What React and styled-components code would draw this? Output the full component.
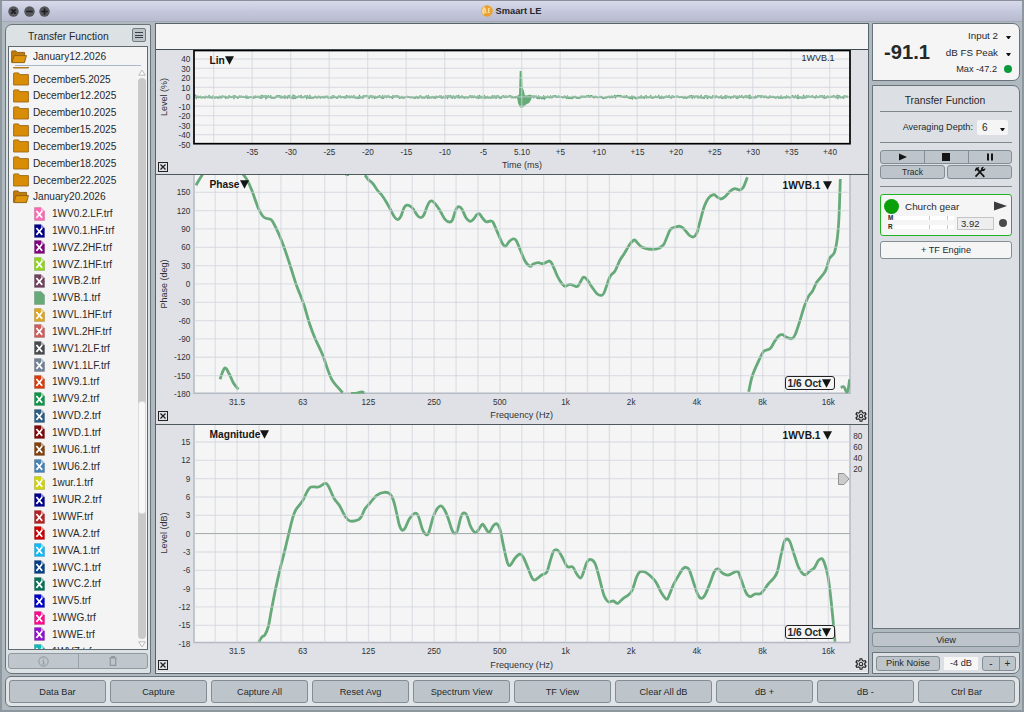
import React from "react";
import styled, { createGlobalStyle, css } from "styled-components";
import { MdOutlineSettings } from "react-icons/md";

const GlobalStyle = createGlobalStyle`
  * {
    box-sizing: border-box;
  }
  body {
    margin: 0;
    background: #b0b8c0;
    font-family: "Liberation Sans", Arial, sans-serif;
    color: #26282b;
  }
`;

const FOLDERS = [
  "December5.2025",
  "December12.2025",
  "December10.2025",
  "December15.2025",
  "December19.2025",
  "December18.2025",
  "December22.2025",
];

const FILES = [
  { name: "1WV0.2.LF.trf", color: "#ff69b4" },
  { name: "1WV0.1.HF.trf", color: "#00008b" },
  { name: "1WVZ.2HF.trf", color: "#800080" },
  { name: "1WVZ.1HF.trf", color: "#8fd422" },
  { name: "1WVB.2.trf", color: "#704060" },
  { name: "1WVB.1.trf", color: "#66aa7a", plain: true },
  { name: "1WVL.1HF.trf", color: "#daa520" },
  { name: "1WVL.2HF.trf", color: "#cd5c5c" },
  { name: "1WV1.2LF.trf", color: "#484a4c" },
  { name: "1WV1.1LF.trf", color: "#708096" },
  { name: "1WV9.1.trf", color: "#d83a0a" },
  { name: "1WV9.2.trf", color: "#0e9648" },
  { name: "1WVD.2.trf", color: "#2a5c84" },
  { name: "1WVD.1.trf", color: "#800808" },
  { name: "1WU6.1.trf", color: "#82400e" },
  { name: "1WU6.2.trf", color: "#4682b4" },
  { name: "1wur.1.trf", color: "#cfd30a" },
  { name: "1WUR.2.trf", color: "#00008f" },
  { name: "1WWF.trf", color: "#b22222" },
  { name: "1WVA.2.trf", color: "#cc0000" },
  { name: "1WVA.1.trf", color: "#10b8f8" },
  { name: "1WVC.1.trf", color: "#043e88" },
  { name: "1WVC.2.trf", color: "#067058" },
  { name: "1WV5.trf", color: "#0000cd" },
  { name: "1WWG.trf", color: "#ff0890" },
  { name: "1WWE.trf", color: "#9010cc" },
  { name: "1WVZ.trf", color: "#10b8b8" },
];

const COMMANDS = [
  "Data Bar",
  "Capture",
  "Capture All",
  "Reset Avg",
  "Spectrum View",
  "TF View",
  "Clear All dB",
  "dB +",
  "dB -",
  "Ctrl Bar",
];

const FREQS = ["31.5", "63", "125", "250", "500", "1k", "2k", "4k", "8k", "16k"];

const PHASE = [
  "196,185.3 199,180 202.7,174",
  "242.7,174 246.7,179.3 251.7,190 258.3,208.3 262.7,216 266,218.3 269.3,219 272.3,221 280,236.7 285,250 290,265 296,284 300,294.3 304,305 310,325 315,338.3 322.7,355 326.7,366.7 331.7,379.3 337.3,386.7 342.7,392.7",
  "345.5,174.6 349,174.6",
  "351,393.3 356,393.3 361.7,392 364.3,393",
  "365,175.2 368.3,179.7 372.7,183.3 377.7,190.7 381.7,195 386.7,202.7 390.7,210 394.3,216.7 397.7,219.6 400.7,216.7 404,207.8 406.7,205.2 410,206 413.3,209 417.3,215.3 420.7,217.7 423.7,215.3 427.3,206 430,201.3 433.3,201.7 439,209 445,219.3 450,222 452.7,219.3 456,209.3 459,206.7 462,209.3 466,217.7 470,221.3 473.3,219.3 476.7,214.7 479.3,213.7 482,217.3 486,221.7 490.7,221 493.3,222.7 498.3,234.3 502.3,243.3 505.5,246.3 509,241.7 512.7,239 516,240.3 520.7,251 525,261 530,266.3 533.3,264 538.3,262.7 543.3,263.7 549.3,261 552.3,264.3 557.3,276 561.7,283.3 565.3,286.3 570,284.3 576.7,286.7 579.3,284 583.3,277.3 586.7,279.3 591.7,286.7 597.3,294 601.7,295.3 604.3,292.3 610,276.7 615,271 620,260 624,254 630,244 634.3,240 637.3,242.7 641.7,247 648.3,249 656.7,249 663.3,245 666.7,237.7 670,230 673.3,227.7 680,226.3 684,229 689.3,235.3 693.3,237 696.7,233.3 700,221.7 704,207.3 708.3,198.3 713.7,194.7 716.7,196.7 721,199 725,196.7 730,191.3 734.7,188.7 740,190 743.3,187.3 747.3,177.3",
  "748.7,391.7 752.3,376 758.3,361.7 763.3,351.7 766.7,350 770.7,348 775,340.7 779.3,335.3 782.7,334.7 786,337 791.7,338.7 795,335 799.3,322.7 804,307.3 808,297.3 812.7,290.7 816.7,282.3 824,273.3 826.7,267.7 829.3,258.7 832.3,255.3 834.7,251.7 837.3,238.3 839,216.7 840.3,179",
  "840.7,387.7 843.7,386.7 847.3,392 849.7,379.3",
  "220,379.3 224.7,368 229.3,374 233.3,382.7 238.3,389.3",
];

const MAGNITUDE = [
  "258.7,642 261.7,637.3 265,634.7 268.3,626.7 271.3,610.7 275.7,588.3 280,569.3 284.3,552.3 289,532.7 292.3,519.3 295.7,510 302.3,501.3 307.3,491.3 311,487 318.3,487 325,483.5 328.3,486 334,498.3 339.3,505.3 345,516 350,521 358.3,519.7 361.7,516 365,508.7 370,503 376.7,495.3 384.3,492.3 390,494 393.3,500 396.7,513.3 399.3,525 402.3,530.3 405,528.3 409.3,519 415,513.3 418.3,516 422.7,530 426,534.6 428.7,532.7 433.3,516.7 437.7,508 441.3,506 445,510.7 448.3,518.7 451.7,529.3 454.3,533.3 457.3,530.7 461,516.7 463.7,513 467,515.7 470.7,526.7 475.3,532.7 478.3,530 482.3,524.3 485,527.3 489,532.3 493.3,525.7 496.7,523.7 500,529.3 503.3,545 506.7,560 509.6,565.7 515,558.3 520,554 523.3,557.3 527.7,567.3 531.7,577.3 534.7,580 541.7,575 546.7,572.3 550,561.7 553.3,551.7 556,549.7 559.3,552 563.3,559.3 567.3,566.7 572.7,567 576.7,574 580.7,578 583.3,572.7 586.7,562.7 590.3,559.3 595,563.3 599,576.7 603.3,593.3 606,599.3 608.7,602 613.3,601 617.7,603.3 623.3,598.3 628.3,595 632.3,590 636.7,576.7 640,571.7 645,572 649.3,575 655.7,581.7 661.7,593.3 666.7,599.3 669.3,595 673.3,585 678.3,576 682.7,569 686,567.3 689.3,570 693.3,581.7 697.7,594.3 701.3,598.3 705,595 710,583.3 714.3,571.7 718.3,569 722.7,573.3 728.3,575 737.3,571.3 740.7,578.3 746,592.7 750,596.7 755,594 761,593.3 768.3,584 773.3,578.7 777.3,571.7 781,555 784.3,541.7 787,539 790,542 794.3,555 798.3,566.7 802.3,573.3 805.7,574.7 810,571 814.3,568 818.3,560.7 821.7,558.7 824.3,562.7 827.7,575 830.3,593.3 832.7,616.7 835,641.7",
];

// catmull-rom through the points
function smooth(str) {
  const p = str.split(" ").map((s) => s.split(",").map(Number));
  let d = `M${p[0][0]} ${p[0][1]}`;
  for (let i = 0; i < p.length - 1; i++) {
    const a = p[i - 1] || p[i];
    const b = p[i];
    const c = p[i + 1];
    const e = p[i + 2] || c;
    d += `C${b[0] + (c[0] - a[0]) / 6} ${b[1] + (c[1] - a[1]) / 6} ${
      c[0] - (e[0] - b[0]) / 6
    } ${c[1] - (e[1] - b[1]) / 6} ${c[0]} ${c[1]}`;
  }
  return d;
}

function impulseNoise() {
  let seed = 7;
  let d = "M195 97";
  for (let x = 195.5; x < 849; x += 0.8) {
    seed = (seed * 16807) % 2147483647;
    const r = seed / 2147483647 - 0.5;
    const ring = x > 524 && x < 640 ? Math.sin(x / 5) * 0.6 : 0;
    d += `L${x.toFixed(1)} ${(97 + r * 1.7 + ring).toFixed(2)}`;
  }
  return d;
}

const range = (n) => Array.from({ length: n }, (_, i) => i);

/* ---------- frame ---------- */

const Window = styled.div`
  width: 1024px;
  height: 712px;
  display: flex;
  flex-direction: column;
  overflow: hidden;
  background: #b0b8c0;
  border-top: 1px solid #8b8f9c;
  border-left: 2px solid #8c979e;
  border-right: 2px solid #8c979e;
  border-bottom: 2px solid #8c979e;
`;

const TitleBar = styled.header`
  height: 21px;
  flex: none;
  display: grid;
  grid-template-columns: 1fr auto 1fr;
  align-items: center;
  padding-left: 6px;
  background: linear-gradient(#d8daea, #c6c9de 50%, #b8bbd0);
  border-bottom: 1px solid #a4a9b8;
`;

const Lights = styled.div`
  display: flex;
  gap: 4.5px;
`;

const Title = styled.div`
  display: flex;
  align-items: center;
  gap: 3px;
  padding-right: 8px;
  font-size: 9.3px;
  font-weight: bold;
`;

const Body = styled.main`
  flex: none;
  height: 651px;
  display: grid;
  grid-template-columns: 146px 714px 148px;
  column-gap: 3.5px;
  padding: 1px 0 0 3px;
`;

const CommandBar = styled.footer`
  flex: none;
  height: 31px;
  margin: 3px 2px 0 3px;
  padding: 3px 4px 3px 3px;
  display: grid;
  grid-template-columns: repeat(10, 1fr);
  gap: 4px;
  background: #e0e4e7;
  border: 1px solid #68737a;
  border-radius: 6px;
`;

const Button = styled.button`
  display: flex;
  align-items: center;
  justify-content: center;
  height: ${(p) => p.$h || 23}px;
  padding: 0;
  font-family: inherit;
  font-size: ${(p) => p.$size || 9.2}px;
  color: #26282b;
  border: 1px solid #828d94;
  border-radius: 3px;
  background: ${(p) => (p.$light ? "#f5f5f5" : "#bdc5ca")};
`;

/* ---------- data bar ---------- */

const DataPanel = styled.aside`
  margin-top: 1px;
  display: flex;
  flex-direction: column;
  padding: 0 2px 2px 2px;
  border: 1px solid #68737a;
  border-radius: 7px 2px 2px 7px;
  background: #dce1e4;
`;

const DataHeader = styled.div`
  height: 21px;
  flex: none;
  display: flex;
  align-items: center;
  padding: 2px 2px 0 20px;
  font-size: 10.35px;
`;

const MenuButton = styled.button`
  width: 14px;
  height: 14px;
  margin: -3px 0 0 auto;
  padding: 2px;
  display: flex;
  flex-direction: column;
  justify-content: space-evenly;
  border: 1px solid #717b82;
  border-radius: 2px;
  background: #bcc4c9;

  i {
    height: 1px;
    background: #3b4247;
  }
`;

const ListBox = styled.div`
  height: 604px;
  flex: none;
  display: flex;
  flex-direction: column;
  border: 1px solid #5f6a70;
  background: #f4f4f4;
`;

const RootRow = styled.div`
  height: 19px;
  flex: none;
  display: flex;
  align-items: center;
  gap: 6px;
  margin: 0 6px 0 6px;
  padding-top: 1px;
  border-bottom: 1px solid #a9b8cd;
  font-size: 10.2px;

  svg {
    margin-left: -4px;
  }
`;

const ListBody = styled.div`
  flex: 1;
  min-height: 0;
  display: flex;
  margin-top: 1px;
`;

const Tree = styled.div`
  flex: 1;
  min-width: 0;
  overflow: hidden;
`;

const Row = styled.div`
  height: 16.83px;
  display: flex;
  align-items: center;
  gap: ${(p) => (p.$file ? 7 : 4)}px;
  padding-left: ${(p) => (p.$file ? 25 : 4)}px;
  white-space: nowrap;
  font-size: ${(p) => (p.$file ? 10 : 10.15)}px;

  &:first-child {
    margin-top: -13.2px;
  }
`;

const Scroll = styled.div`
  width: 10px;
  flex: none;
  display: flex;
  flex-direction: column;
  align-items: center;
  padding: 2px 1px 1px 0;
`;

const ScrollTrack = styled.div`
  flex: 1;
  width: 8px;
  margin: 2px 0;
  padding-top: 323px;
  border-radius: 4px;
  background: #c9c9c9;
`;

const ScrollThumb = styled.div`
  height: 113px;
  border-radius: 3px;
  border: 1px solid #dadada;
  background: #f8f8f8;
`;

const ListTools = styled.div`
  margin-top: 3px;
  height: 16px;
  display: grid;
  grid-template-columns: 1fr 1fr;
  border: 1px solid #909aa0;
  border-radius: 3px;
  background: #bfc7cc;

  span {
    display: flex;
    align-items: center;
    justify-content: center;
  }
  span + span {
    border-left: 1px solid #98a2a8;
  }
`;

/* ---------- plots ---------- */

const Plots = styled.section`
  display: flex;
  flex-direction: column;
  border: 1px solid #56636a;
  background: #f5f5f5;
`;

const Spare = styled.div`
  height: 26px;
  flex: none;
  border-bottom: 1px solid #3c4c50;
`;

const Plot = styled.div`
  position: relative;
  height: ${(p) => p.$h}px;
  flex: none;
  background: #dfe1e6;

  & + & {
    border-top: 1px solid #4c595f;
  }
`;

const Canvas = styled.svg`
  display: block;
  font-family: "Liberation Sans", Arial, sans-serif;
`;

const PlotLabel = styled.div`
  position: absolute;
  display: flex;
  align-items: center;
  gap: ${(p) => p.$gap || 0}px;
  height: 12px;
  font-size: 10.2px;
  font-weight: bold;
  color: #151515;
  white-space: nowrap;
  ${(p) =>
    p.$right
      ? css`
          top: 4px;
          right: 36px;
        `
      : css`
          top: ${p.$top || 3}px;
          left: 54px;
        `}
`;

const TraceName = styled.div`
  position: absolute;
  top: 3px;
  right: 33px;
  font-size: 9px;
  line-height: 11px;
`;

const Smoothing = styled.div`
  position: absolute;
  right: 33px;
  bottom: ${(p) => p.$bottom}px;
  width: 50px;
  height: 14px;
  display: flex;
  align-items: center;
  justify-content: center;
  gap: 1px;
  font-size: 10.2px;
  font-weight: bold;
  white-space: nowrap;
  border: 1px solid #222;
  border-radius: 3px;
  background: #f5f5f5;
`;

const CloseBox = styled.div`
  position: absolute;
  left: 2px;
  bottom: ${(p) => p.$bottom}px;
  width: 10px;
  height: 10px;
  display: flex;
  border: 1px solid #222;
`;

const Gear = styled(MdOutlineSettings)`
  position: absolute;
  right: 0;
  bottom: 1px;
  width: 14px;
  height: 14px;
  color: #222;
`;

const Down = () => (
  <svg width="9" height="9" viewBox="0 0 9 9">
    <path d="M0 .3H9L4.5 8.7Z" fill="#151515" />
  </svg>
);

const Close = ({ bottom }) => (
  <CloseBox $bottom={bottom}>
    <svg width="8" height="8" viewBox="0 0 8 8">
      <path d="M1.5 1.5L6.5 6.5M6.5 1.5L1.5 6.5" stroke="#222" strokeWidth="1.3" />
    </svg>
  </CloseBox>
);

const GRID = "rgba(208,211,220,0.62)";

function Ticks({ items, x, y, step, anchor = "end" }) {
  return items.map((t, i) => (
    <text
      key={t}
      x={anchor === "end" ? x : x + step * i}
      y={anchor === "end" ? y + step * i : y}
      fontSize="8.2"
      textAnchor={anchor}
      fill="#303236"
    >
      {t}
    </text>
  ));
}

function AxisName({ y, children }) {
  return (
    <text
      transform={`translate(167 ${y}) rotate(-90)`}
      textAnchor="middle"
      fontSize="9"
      fill="#303236"
    >
      {children}
    </text>
  );
}

function ImpulsePlot() {
  return (
    <Plot $h={124}>
      <Canvas width="712" height="124" viewBox="156 50 712 124">
        <rect x="194" y="51" width="656" height="92.5" fill="#f5f5f5" />
        <path d={impulseNoise()} stroke="#66aa7a" strokeWidth="2" fill="none" />
        <path
          d="M517 96L519 94.5L519.7 71H522L522.6 88L524 91L525 96L532 97L531 100L529 103L526 104.5L523 107.5H520L518 103Z"
          fill="#66aa7a"
        />
        <g stroke={GRID} strokeWidth="1.3">
          {range(9).map((i) => (
            <path key={i} d={`M194 ${59 + i * 9.45}H850`} />
          ))}
          {range(17).map((i) => (
            <path key={i} d={`M${213.7 + i * 38.5} 51V143`} />
          ))}
        </g>
        <rect x="194" y="50.5" width="656" height="93.2" fill="none" stroke="#000" strokeWidth="1.7" />
        <Ticks
          items={["40", "30", "20", "10", "0", "-10", "-20", "-30", "-40", "-50"]}
          x={190.3}
          y={62}
          step={9.5}
        />
        <Ticks
          items={["-35", "-30", "-25", "-20", "-15", "-10", "-5", "5.10", "+5", "+10", "+15", "+20", "+25", "+30", "+35", "+40"]}
          x={252.5}
          y={155}
          step={38.5}
          anchor="middle"
        />
        <AxisName y={97}>Level (%)</AxisName>
        <text x="522" y="168.3" textAnchor="middle" fontSize="9" fill="#303236">
          Time (ms)
        </text>
      </Canvas>
      <PlotLabel $top={4}>
        Lin
        <Down />
      </PlotLabel>
      <TraceName>1WVB.1</TraceName>
      <Close bottom={2} />
    </Plot>
  );
}

function FreqPlot({ top, height, bottom, first, traces, ticks, axis, axisY, label, scale, closeBottom }) {
  return (
    <Plot $h={height + 1}>
      <Canvas width="712" height={height} viewBox={`156 ${top} 712 ${height}`}>
        <rect x="194" y={top} width="656" height={bottom - top} fill="#f5f5f5" />
        <path d={`M194 ${top}V${bottom}H850V${top}`} fill="none" stroke="#b4b9c3" strokeWidth="1.5" />
        <svg x="194" y={top} width="656" height={bottom - top + 0.5} viewBox={`194 ${top} 656 ${bottom - top + 0.5}`}>
          {traces.map((t) => (
            <path
              key={t}
              d={smooth(t)}
              fill="none"
              stroke="#66aa7a"
              strokeWidth="2.8"
              strokeLinejoin="round"
            />
          ))}
        </svg>
        <g stroke={GRID} strokeWidth="1.3">
          {range(ticks.length - 1).map((i) => (
            <path key={i} d={`M194 ${first + i * 18.33}H850`} />
          ))}
          {range(29).map((i) => (
            <path key={i} d={`M${215.2 + i * 21.9} ${top}V${bottom}`} />
          ))}
        </g>
        {scale && <path d="M195 533.5H850" stroke="#a8aeac" />}
        <Ticks items={ticks} x={190.3} y={first + 3} step={18.33} />
        <Ticks items={FREQS} x={237} y={bottom + 11.8} step={65.7} anchor="middle" />
        <AxisName y={axisY}>{axis}</AxisName>
        <text x="521.7" y={bottom + 25} textAnchor="middle" fontSize="9.1" fill="#303236">
          Frequency (Hz)
        </text>
        {scale && (
          <>
            {["80", "60", "40", "20"].map((t, i) => (
              <text key={t} x="857.8" y={439.3 + i * 11} textAnchor="middle" fontSize="8.2" fill="#303236">
                {t}
              </text>
            ))}
            <path d="M838.5 473.5H844L849 479L844 484.5H838.5Z" fill="#ccc" stroke="#888" strokeWidth=".9" />
          </>
        )}
      </Canvas>
      <PlotLabel>
        {label}
        <Down />
      </PlotLabel>
      <PlotLabel $right $gap={2}>
        1WVB.1
        <Down />
      </PlotLabel>
      <Smoothing $bottom={closeBottom + 31}>
        1/6 Oct
        <Down />
      </Smoothing>
      <Close bottom={closeBottom} />
      <Gear />
    </Plot>
  );
}

/* ---------- control bar ---------- */

const Controls = styled.aside`
  display: flex;
  flex-direction: column;
`;

const LevelBox = styled.div`
  height: 58px;
  flex: none;
  display: flex;
  align-items: center;
  padding: 0 7px 0 11px;
  background: #f5f5f5;
  border: 1px solid #68737a;
  border-radius: 0 7px 7px 0;
`;

const Level = styled.div`
  width: 54px;
  font-size: 20.2px;
  font-weight: bold;
`;

const LevelInfo = styled.div`
  flex: 1;
  display: grid;
  row-gap: 0;
`;

const InfoLine = styled.div`
  height: 16.6px;
  display: flex;
  align-items: center;
  justify-content: flex-end;
  gap: 7px;
  font-size: ${(p) => p.$size || 9.8}px;
  white-space: nowrap;
`;

const Caret = styled.span`
  width: 5px;
  height: 0;
  margin: 4px 1px 0 1px;
  border-left: 2.5px solid transparent;
  border-right: 2.5px solid transparent;
  border-top: 3px solid #111;
`;

const Dot = styled.span`
  width: ${(p) => p.$d}px;
  height: ${(p) => p.$d}px;
  flex: none;
  border-radius: 50%;
  background: ${(p) => p.$c};
`;

const Measure = styled.div`
  height: 544px;
  flex: none;
  margin-top: 4px;
  padding: 6px 7px 0 7px;
  display: flex;
  flex-direction: column;
  background: #dce0e4;
  border: 1px solid #68737a;
  border-radius: 0 7px 0 0;
`;

const MeasureTitle = styled.div`
  height: 20px;
  line-height: 17px;
  text-align: center;
  padding-right: 2px;
  font-size: 10.35px;
  border-bottom: 1px solid #7d878d;
`;

const Depth = styled.div`
  height: 31px;
  display: flex;
  align-items: center;
  justify-content: flex-end;
  padding-right: 4px;
  gap: 4px;
  font-size: 9.15px;
  border-bottom: 1px solid #7d878d;
`;

const DepthSelect = styled.div`
  width: 31px;
  height: 15px;
  display: flex;
  align-items: center;
  justify-content: space-between;
  padding: 0 2px 0 5px;
  font-size: 10px;
  background: #f5f5f5;
  border-radius: 2px;
`;

const Transport = styled.div`
  margin-top: 7px;
  padding-bottom: 7px;
  display: grid;
  gap: 1px;
  border-bottom: 1px solid #7d878d;
`;

const Segments = styled.div`
  display: grid;
  grid-template-columns: repeat(${(p) => p.$n}, 1fr);
  height: ${(p) => p.$h}px;
  width: ${(p) => (p.$w ? p.$w + "px" : "auto")};
  border: 1px solid #828d94;
  border-radius: 3px;
  background: #bdc5ca;
  font-size: 10px;

  span {
    display: flex;
    align-items: center;
    justify-content: center;
  }
  span + span {
    border-left: 1px solid #828d94;
  }
`;

const Pair = styled.div`
  display: grid;
  grid-template-columns: 1fr 1fr;
  gap: 2px;
`;

const Engine = styled.div`
  height: 42px;
  margin: 7px 0 5px;
  padding: 3px 4px 0 3px;
  border: 1px solid #22b322;
  border-radius: 3px;
  background: #f5f5f5;
`;

const EngineTop = styled.div`
  height: 16px;
  display: flex;
  align-items: center;
  gap: 6px;
  font-size: 9.9px;

  svg {
    margin-left: auto;
  }
`;

const EngineBottom = styled.div`
  height: 18px;
  display: flex;
  align-items: center;
  gap: 3px;
  padding-left: 4px;
`;

const Meters = styled.div`
  width: 66px;
  margin-top: -2px;
  display: grid;
  row-gap: 1px;
`;

const MeterLine = styled.div`
  display: grid;
  grid-template-columns: 7px 34px 18px 7px;
  align-items: center;
  height: 8px;
  font-size: 6.3px;
  font-weight: bold;

  i {
    height: 4px;
    background: #fff;
  }
  i + i {
    border-left: 1px solid #c9c9c9;
  }
`;

const Delay = styled.div`
  width: 37px;
  height: 13px;
  margin-right: 2px;
  padding-left: 3px;
  line-height: 12px;
  font-size: 9.5px;
  border: 1px solid #c4c4c4;
  background: #eee;
`;

const Generator = styled.div`
  height: 22px;
  margin-top: 5px;
  padding: 0 3px;
  display: flex;
  align-items: center;
  background: #dce0e4;
  border: 1px solid #68737a;
  border-radius: 0 0 7px 0;
`;

const Gain = styled.div`
  width: 34px;
  height: 13px;
  margin: 0 4px;
  display: flex;
  align-items: center;
  justify-content: center;
  font-size: 9.2px;
  background: #f6f6f6;
`;

const NoiseButton = styled(Button)`
  width: 64px;
`;

const ViewButton = styled(Button)`
  flex: none;
  margin-top: 3px;
`;

/* ---------- icons ---------- */

const Light = ({ d }) => (
  <svg width="11" height="11" viewBox="0 0 11 11">
    <circle cx="5.5" cy="5.5" r="5.2" fill="#55575a" />
    <path d={d} stroke="#1d1f22" strokeWidth="1.7" strokeLinecap="round" />
  </svg>
);

const Logo = () => (
  <svg width="12" height="12" viewBox="0 0 12 12">
    <circle cx="6" cy="6" r="5.8" fill="#eba02b" />
    <path d="M2.2 9.5A5 5 0 0 1 4 1.5L3.6 9.3Z" fill="#f7d9a0" />
    <path d="M4.6 3.4V7.6H6.3M9 3.4H7.4V7.6H9M7.4 5.4H8.8" stroke="#fff0cc" strokeWidth=".8" fill="none" />
  </svg>
);

const FolderIcon = () => (
  <svg width="16" height="14" viewBox="0 0 16 14">
    <path d="M.6 13V1.6Q.6.9 1.3.9H5.6L6.6 2.6H15.4V13Z" fill="#d98c06" stroke="#9b6a16" strokeWidth=".9" />
  </svg>
);

const OpenFolderIcon = () => (
  <svg width="16" height="14" viewBox="0 0 16 14">
    <path d="M.6 12V1.6Q.6.9 1.3.9H5L6 2.4H13.6V12Z" fill="#c27b08" stroke="#8b5f14" strokeWidth=".9" />
    <path d="M.8 12.6L3.2 5.6H15.5L13.4 12.6Z" fill="#e0950e" stroke="#8b5f14" strokeWidth=".9" />
  </svg>
);

const FileIcon = ({ color, plain }) => (
  <svg width="11" height="14" viewBox="0 0 11 14">
    <path d="M.4.5H7L10.6 4V13.5H.4Z" fill={color} stroke="#00000038" strokeWidth=".6" />
    {!plain && <path d="M7 .5V4H10.6Z" fill="#ffffff88" />}
    {!plain && <path d="M2.4 4L8.2 10.9M8.2 4L2.4 10.9" stroke="#fff" strokeWidth="1.7" />}
  </svg>
);

const ToolsIcon = () => (
  <svg width="12" height="12" viewBox="0 0 12 12">
    <path d="M1.5 10.6L8.2 3.6" stroke="#151515" strokeWidth="1.7" />
    <path d="M7.3 4.3A2.3 2.3 0 0 1 10 .9L8.8 2.3L9.7 3.2L11.2 2A2.3 2.3 0 0 1 7.9 4.8Z" fill="#151515" />
    <path d="M4.2 4.2L10.3 10.8" stroke="#151515" strokeWidth="1.7" />
    <path d="M.7 4.4L2 1.8L5.6.9L4.4 2.2L5.4 3.4L3.8 5L2.7 3.9L1.7 5.3Z" fill="#151515" />
  </svg>
);

function DataBar() {
  return (
    <DataPanel>
      <DataHeader>
        Transfer Function
        <MenuButton>
          <i />
          <i />
          <i />
        </MenuButton>
      </DataHeader>
      <ListBox>
        <RootRow>
          <OpenFolderIcon />
          January12.2026
        </RootRow>
        <ListBody>
          <Tree>
            <Row>
              <FolderIcon />
            </Row>
            {FOLDERS.map((name) => (
              <Row key={name}>
                <FolderIcon />
                {name}
              </Row>
            ))}
            <Row>
              <OpenFolderIcon />
              January20.2026
            </Row>
            {FILES.map((f) => (
              <Row key={f.name} $file>
                <FileIcon color={f.color} plain={f.plain} />
                {f.name}
              </Row>
            ))}
          </Tree>
          <Scroll>
            <svg width="8" height="7" viewBox="0 0 8 7">
              <path d="M4 1L7.3 6.2H.7Z" fill="#fafafa" stroke="#bbb" />
            </svg>
            <ScrollTrack>
              <ScrollThumb />
            </ScrollTrack>
            <svg width="8" height="7" viewBox="0 0 8 7">
              <path d="M4 6L7.3 .8H.7Z" fill="#fafafa" stroke="#bbb" />
            </svg>
          </Scroll>
        </ListBody>
      </ListBox>
      <ListTools>
        <span>
          <svg width="11" height="11" viewBox="0 0 11 11" fill="none" stroke="#8e989e">
            <circle cx="5.5" cy="5.5" r="4.7" />
            <path d="M5.5 2.3V3.5M4.5 4.8H5.6V8M4.3 8.1H6.9" />
          </svg>
        </span>
        <span>
          <svg width="8" height="10" viewBox="0 0 8 10" fill="none" stroke="#8e989e">
            <path d="M.5 1.9H7.5M2.7 1.7V.6H5.3V1.7M1.3 2V9.3H6.7V2" strokeWidth="1.2" />
          </svg>
        </span>
      </ListTools>
    </DataPanel>
  );
}

function ControlBar() {
  return (
    <Controls>
      <LevelBox>
        <Level>-91.1</Level>
        <LevelInfo>
          <InfoLine>
            Input 2<Caret />
          </InfoLine>
          <InfoLine>
            dB FS Peak
            <Caret />
          </InfoLine>
          <InfoLine $size={9.2}>
            Max -47.2
            <Dot $d={8} $c="#0a9a3c" />
          </InfoLine>
        </LevelInfo>
      </LevelBox>
      <Measure>
        <MeasureTitle>Transfer Function</MeasureTitle>
        <Depth>
          Averaging Depth:
          <DepthSelect>
            6<Caret />
          </DepthSelect>
        </Depth>
        <Transport>
          <Segments $n={3} $h={14}>
            <span>
              <svg width="8" height="8" viewBox="0 0 8 8">
                <path d="M0 .5L8 4L0 7.5Z" fill="#151515" />
              </svg>
            </span>
            <span>
              <svg width="8" height="8" viewBox="0 0 8 8">
                <path d="M0 0H8V8H0Z" fill="#151515" />
              </svg>
            </span>
            <span>
              <svg width="8" height="8" viewBox="0 0 8 8">
                <path d="M1 .5H3V7.5H1ZM5 .5H7V7.5H5Z" fill="#151515" />
              </svg>
            </span>
          </Segments>
          <Pair>
            <Button $h={14} $size={8.5}>
              Track
            </Button>
            <Button $h={14}>
              <ToolsIcon />
            </Button>
          </Pair>
        </Transport>
        <Engine>
          <EngineTop>
            <Dot $d={15} $c="radial-gradient(circle at 50% 40%, #0aa00a 60%, #0b7d0b)" />
            Church gear
            <svg width="13" height="10" viewBox="0 0 13 10">
              <path d="M0 .5L13 5L0 9.5Z" fill="#3c3c3e" />
            </svg>
          </EngineTop>
          <EngineBottom>
            <Meters>
              <MeterLine>
                M<i />
                <i />
                <i />
              </MeterLine>
              <MeterLine>
                R<i />
                <i />
                <i />
              </MeterLine>
            </Meters>
            <Delay>3.92</Delay>
            <Dot $d={8} $c="#4a4a4c" />
          </EngineBottom>
        </Engine>
        <Button $h={18} $light>
          + TF Engine
        </Button>
      </Measure>
      <ViewButton $h={15}>View</ViewButton>
      <Generator>
        <NoiseButton $h={15}>Pink Noise</NoiseButton>
        <Gain>-4 dB</Gain>
        <Segments $n={2} $h={15} $w={34}>
          <span>-</span>
          <span>+</span>
        </Segments>
      </Generator>
    </Controls>
  );
}

const App = () => {
  return (
    <>
      <GlobalStyle />
      <Window>
        <TitleBar>
          <Lights>
            <Light d="M3.8 3.8L7.2 7.2M7.2 3.8L3.8 7.2" />
            <Light d="M3 5.5H8" />
            <Light d="M3 5.5H8M5.5 3V8" />
          </Lights>
          <Title>
            <Logo />
            Smaart LE
          </Title>
        </TitleBar>
        <Body>
          <DataBar />
          <Plots>
            <Spare />
            <ImpulsePlot />
            <FreqPlot
              top={175}
              height={249}
              bottom={393.3}
              first={192.3}
              traces={PHASE}
              ticks={["150", "120", "90", "60", "30", "0", "-30", "-60", "-90", "-120", "-150", "-180"]}
              axis="Phase (deg)"
              axisY={284}
              label="Phase"
              closeBottom={3}
            />
            <FreqPlot
              top={425}
              height={247}
              bottom={642.5}
              first={442}
              traces={MAGNITUDE}
              ticks={["15", "12", "9", "6", "3", "0", "-3", "-6", "-9", "-12", "-15", "-18"]}
              axis="Level (dB)"
              axisY={533}
              label="Magnitude"
              closeBottom={2}
              scale
            />
          </Plots>
          <ControlBar />
        </Body>
        <CommandBar>
          {COMMANDS.map((c) => (
            <Button key={c}>{c}</Button>
          ))}
        </CommandBar>
      </Window>
    </>
  );
};

export default App;
